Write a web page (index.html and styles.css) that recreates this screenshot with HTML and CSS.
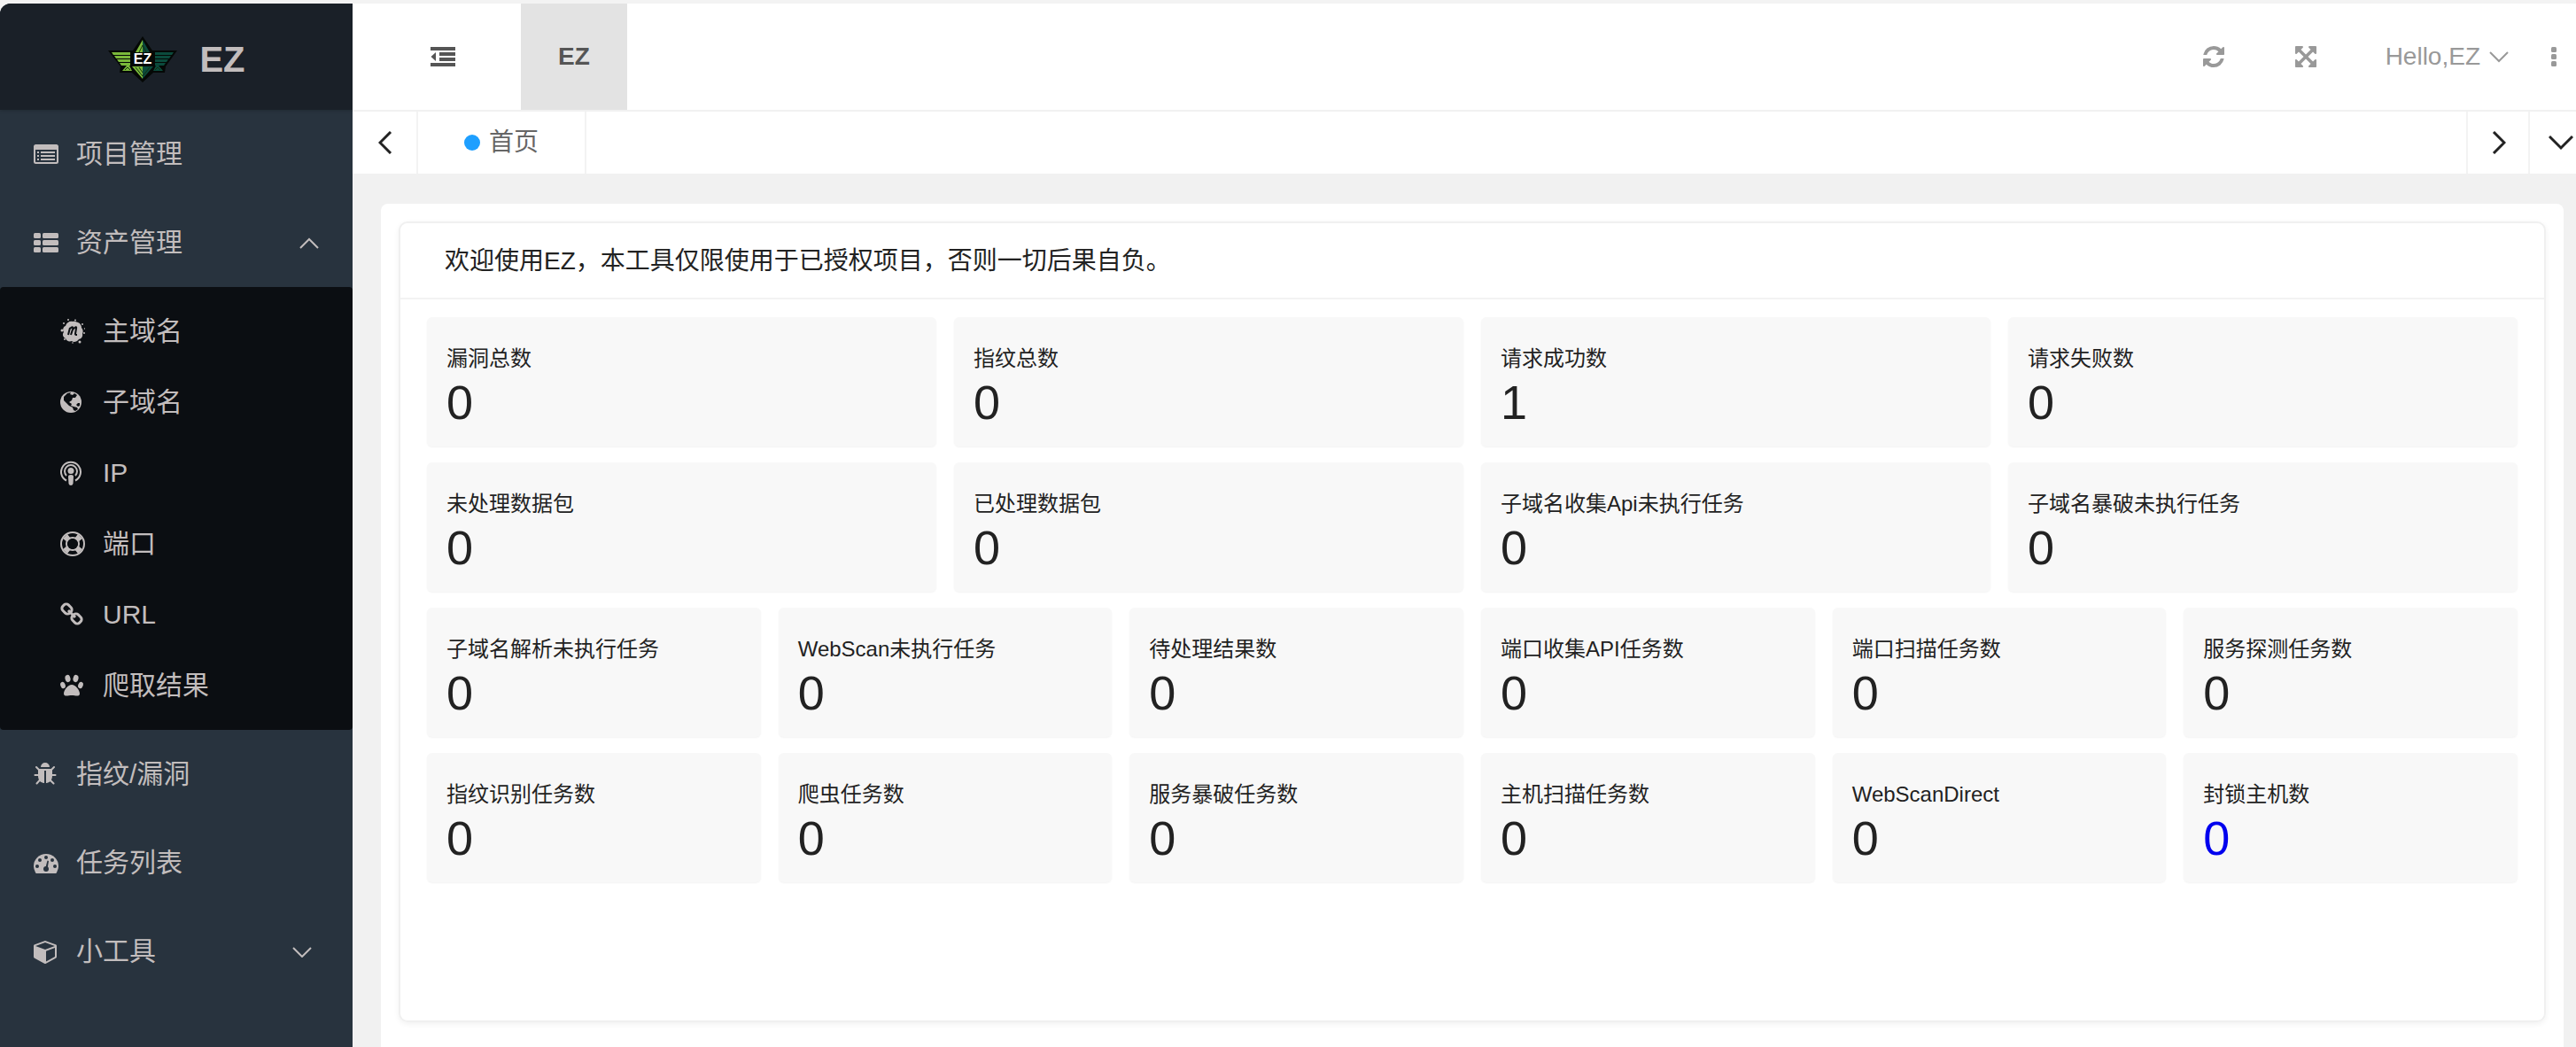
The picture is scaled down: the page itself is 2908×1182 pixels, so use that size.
FILE: index.html
```html
<!DOCTYPE html>
<html lang="zh-CN">
<head>
    <meta charset="UTF-8">
    <meta name="viewport" content="width=device-width, initial-scale=1.0">
    <title>EZ</title>
    <link rel="stylesheet" href="styles.css">
</head>
<body>
    <div class="layout">
        <aside class="sidebar">
            <a class="logo" href="#">
                <svg width="80" height="54" viewBox="0 0 80 54">
                    <path fill="#050806" d="M40 1L51 17H79L66 35L65 42H52L40 53L28 42H14L15 35L1 17H29Z"/>
                    <path fill="#7ab83a" d="M40 5V19H32ZM5 19H26V22H7ZM8 23H26V26H10ZM11 27H26V30H13ZM14 31H26V34H16ZM22 34L17 40H28L25 34ZM28 35H40V49Z"/>
                    <path fill="#0b4a3c" d="M40 5V19H48ZM54 19H75L73 22H54ZM54 23H72L70 26H54ZM54 27H69L67 30H54ZM54 31H66L64 34H54ZM58 34L63 40H52L55 34ZM52 35H40V49Z"/>
                    <path stroke="#12300f" stroke-width="1" fill="none" d="M32 36L40 46M36 36L40 42M48 36L40 46M20 39L23 36L26 39M54 39L57 36L60 39M36 19L40 11L44 19"/>
                    <path fill="#050806" d="M28 19H53V33H28Z"/>
                    <text class="logo-mark" x="40" y="32" text-anchor="middle">EZ</text>
                </svg>
                <span>EZ</span>
            </a>
            <ul class="menu">
                <li>
                    <a href="#">
                        <svg class="icon" viewBox="0 0 28 28"><path fill-rule="evenodd" d="M2.500 3H25.500A2.500 2.500 0 0 1 28 5.500V22.500A2.500 2.500 0 0 1 25.500 25H2.500A2.500 2.500 0 0 1 0 22.500V5.500A2.500 2.500 0 0 1 2.500 3ZM2 9V22.500L2.500 23H25.500L26 22.500V9Z"/><path d="M4 11h2v2H4zM8 11h16v2H8zM4 15h2v2H4zM8 15h16v2H8zM4 19h2v2H4zM8 19h16v2H8z"/></svg>
                        项目管理
                    </a>
                </li>
                <li>
                    <a href="#">
                        <svg class="icon" viewBox="0 0 28 28"><rect y="3" width="8" height="6" rx="1.500"/><rect x="10" y="3" width="18" height="6" rx="1.500"/><rect y="11" width="8" height="6" rx="1.500"/><rect x="10" y="11" width="18" height="6" rx="1.500"/><rect y="19" width="8" height="6" rx="1.500"/><rect x="10" y="19" width="18" height="6" rx="1.500"/></svg>
                        资产管理
                        <svg class="arrow arrow-up" width="22" height="14" viewBox="0 0 22 14"><path d="M1 13L11 3L21 13"/></svg>
                    </a>
                    <ul class="submenu">
                        <li><a href="#">
                            <svg class="icon" viewBox="0 0 28 28"><path d="M14 3C17 2 19 4 20 4C23 5 24 8 24 10C26 12 26 15 25 17C26 20 23 23 21 23C19 26 15 27 13 25C10 26 7 25 6 22C3 21 2 17 4 15C2 12 4 8 6 8C7 4 11 2 14 3Z"/><circle cx="9" cy="1" r="1"/><circle cx="17" cy="1.500" r="1"/><circle cx="2" cy="13" r="1.500"/><circle cx="4" cy="5" r="1"/><circle cx="25" cy="6" r="1"/><circle cx="27.500" cy="11" r=".7"/><circle cx="27" cy="16" r="1"/><circle cx="5" cy="23" r="1"/><circle cx="22" cy="26" r="1.500"/><circle cx="14" cy="27" r=".8"/><path class="cut-line" d="M9 18L11 10M11 11Q15 7 14 12L12 18M14 12Q19 7 18 11L17 17Q17 18 19 18"/></svg>
                            主域名
                        </a></li>
                        <li><a href="#">
                            <svg class="icon" viewBox="0 0 28 28"><circle cx="12" cy="14" r="12"/><path class="cut" d="M4 8L8 4L12 3L11 5L14 6L16 4L19 6L17 9L14 9L13 12L10 14L13 16L12 18L15 19L19 20L20 22L17 24L15 23L14 20L10 18L7 15L4 12ZM18 17L20 15L22 15L22 18L20 19Z"/></svg>
                            子域名
                        </a></li>
                        <li><a href="#">
                            <svg class="icon" viewBox="0 0 28 28"><path class="line" d="M7 22.500A11 11 0 1 1 17 22.500M7 17A7 7 0 1 1 17 17"/><circle cx="12" cy="11.500" r="3.500"/><path d="M9 18Q9 16 12 16T15 18L14.500 26Q14 28 12 28T9.500 26Z"/></svg>
                            IP
                        </a></li>
                        <li><a href="#">
                            <svg class="icon" viewBox="0 0 28 28"><circle class="line" cx="14" cy="14" r="13"/><circle class="line" cx="14" cy="14" r="7"/><path d="M3 8L8 3L12 8L8 12ZM20 3L25 8L20 12L16 8ZM3 20L8 16L12 20L8 25ZM20 25L25 20L20 16L16 20Z"/><circle class="cut" cx="14" cy="14" r="6"/></svg>
                            端口
                        </a></li>
                        <li><a href="#">
                            <svg class="icon" viewBox="0 0 28 28"><g class="link-line"><rect x="2" y="3" width="11" height="9" rx="3.500" transform="rotate(45 7.500 7.500)"/><rect x="13" y="14" width="11" height="9" rx="3.500" transform="rotate(45 18.500 18.500)"/><path d="M9 9L17 17"/></g></svg>
                            URL
                        </a></li>
                        <li><a href="#">
                            <svg class="icon" viewBox="0 0 28 28"><ellipse cx="8.500" cy="6" rx="3" ry="4.200" transform="rotate(-12 8.500 6)"/><ellipse cx="17.500" cy="6" rx="3" ry="4.200" transform="rotate(12 17.500 6)"/><ellipse cx="3" cy="13.500" rx="2.700" ry="3.800" transform="rotate(-20 3 13.500)"/><ellipse cx="23" cy="13.500" rx="2.700" ry="3.800" transform="rotate(20 23 13.500)"/><path d="M13 13C17 13 22 19 22 23C22 27 17 25 13 25S4 27 4 23C4 19 9 13 13 13Z"/></svg>
                            爬取结果
                        </a></li>
                    </ul>
                </li>
                <li>
                    <a href="#">
                        <svg class="icon" viewBox="64 0 1792 1792"><path d="M1696 960q0 26-19 45t-45 19h-224q0 171-67 290l208 209q19 19 19 45t-19 45q-18 19-45 19t-45-19l-198-197q-5 5-15 13t-42 28.500-65 36.500-82 29-97 13v-896h-128v896q-51 0-101.500-13.500t-87-33-66-39-43.500-32.500l-15-14-183 207q-20 21-48 21-24 0-43-16-19-18-20.500-44.500t15.500-46.500l202-227q-58-114-58-274h-224q-26 0-45-19t-19-45 19-45 45-19h224v-294l-173-173q-19-19-19-45t19-45 45-19 45 19l173 173h844l173-173q19-19 45-19t45 19 19 45-19 45l-173 173v294h224q26 0 45 19t19 45zm-480-576h-640q0-133 93.500-226.500t226.500-93.500 226.500 93.500 93.500 226.500z"/></svg>
                        指纹/漏洞
                    </a>
                </li>
                <li>
                    <a href="#">
                        <svg class="icon" viewBox="0 0 28 28"><path d="M2 25Q0 21 0 18A14 14 0 0 1 28 18Q28 21 26 25Q25.500 26 25 26H3Q2.500 26 2 25Z"/><g class="cut-menu"><circle cx="4" cy="18" r="2"/><circle cx="7" cy="11" r="2"/><circle cx="14" cy="8" r="2"/><circle cx="21" cy="11" r="2"/><circle cx="24" cy="18" r="2"/><circle cx="14" cy="21" r="3"/><path d="M13 21L15.500 11.500L17 12L15.500 21Z"/></g></svg>
                        任务列表
                    </a>
                </li>
                <li>
                    <a href="#">
                        <svg class="icon" viewBox="64 0 1792 1792"><path d="M896 1629l640-349v-636l-640 233v752zm-64-865l698-254-698-254-698 254zm832-252v768q0 35-18 65t-49 47l-704 384q-28 16-61 16t-61-16l-704-384q-31-17-49-47t-18-65v-768q0-40 23-73t61-47l704-256q22-8 44-8t44 8l704 256q38 14 61 47t23 73z" transform="translate(64 0)"/></svg>
                        小工具
                        <svg class="arrow arrow-down" width="22" height="14" viewBox="0 0 22 14"><path d="M1 3L11 13L21 3"/></svg>
                    </a>
                </li>
            </ul>
        </aside>

        <div class="main">
            <header class="header">
                <button class="toggle" type="button" aria-label="收起菜单">
                    <svg class="icon" viewBox="0 0 28 28"><path d="M0 3h28v4H0zM10 9h18v4H10zM10 15h18v4H10zM0 21h28v4H0zM6 9v10L0.500 14z"/></svg>
                </button>
                <a class="module" href="#">EZ</a>
                <div class="tools">
                    <button type="button" aria-label="刷新">
                        <svg class="icon" viewBox="0 0 1792 1792"><path d="M1639 1056q0 5-1 7-64 268-268 434.500t-478 166.500q-146 0-282.500-55t-243.500-157l-129 129q-19 19-45 19t-45-19-19-45v-448q0-26 19-45t45-19h448q26 0 45 19t19 45-19 45l-137 137q71 66 161 102t187 36q134 0 250-65t186-179q11-17 53-117 8-23 30-23h192q13 0 22.500 9.500t9.500 22.500zm25-800v448q0 26-19 45t-45 19h-448q-26 0-45-19t-19-45 19-45l138-138q-148-137-349-137-134 0-250 65t-186 179q-11 17-53 117-8 23-30 23h-199q-13 0-22.500-9.500t-9.500-22.500v-7q65-268 270-434.500t480-166.500q146 0 284 55.500t245 156.500l130-129q19-19 45-19t45 19 19 45z"/></svg>
                    </button>
                    <button type="button" aria-label="全屏">
                        <svg class="icon" viewBox="0 0 1792 1792"><path d="M1411 541l-355 355 355 355 144-144q29-31 70-14 39 17 39 59v448q0 26-19 45t-45 19h-448q-42 0-59-40-17-39 14-69l144-144-355-355-355 355 144 144q31 30 14 69-17 40-59 40h-448q-26 0-45-19t-19-45v-448q0-42 40-59 39-17 69 14l144 144 355-355-355-355-144 144q-19 19-45 19-12 0-24-5-40-17-40-59v-448q0-26 19-45t45-19h448q42 0 59 40 17 39-14 69l-144 144 355 355 355-355-144-144q-31-30-14-69 17-40 59-40h448q26 0 45 19t19 45v448q0 42-39 59-13 5-25 5-26 0-45-19z"/></svg>
                    </button>
                    <a class="user" href="#">
                        Hello,EZ
                        <svg class="arrow" width="22" height="14" viewBox="0 0 22 14"><path d="M1 2L11 12L21 2"/></svg>
                    </a>
                    <button class="more" type="button" aria-label="更多">
                        <svg width="6" height="22" viewBox="0 0 6 22"><rect width="6" height="6" rx="1.500"/><rect y="8" width="6" height="6" rx="1.500"/><rect y="16" width="6" height="6" rx="1.500"/></svg>
                    </button>
                </div>
            </header>

            <nav class="tabs">
                <button type="button" aria-label="向左"><svg width="16" height="26" viewBox="0 0 16 26"><path d="M14 1L2 13L14 25"/></svg></button>
                <a class="tab" href="#"><span class="dot"></span>首页</a>
                <button class="next" type="button" aria-label="向右"><svg width="16" height="26" viewBox="0 0 16 26"><path d="M2 1L14 13L2 25"/></svg></button>
                <button class="close" type="button" aria-label="标签操作"><svg width="28" height="18" viewBox="0 0 28 18"><path d="M1 2L14 15L27 2"/></svg></button>
            </nav>

            <main class="content">
                <div class="panel">
                    <section class="card">
                        <h1>欢迎使用EZ，本工具仅限使用于已授权项目，否则一切后果自负。</h1>
                        <div class="stats">
                            <div class="row four">
                                <div class="stat"><h2>漏洞总数</h2><p>0</p></div>
                                <div class="stat"><h2>指纹总数</h2><p>0</p></div>
                                <div class="stat"><h2>请求成功数</h2><p>1</p></div>
                                <div class="stat"><h2>请求失败数</h2><p>0</p></div>
                                <div class="stat"><h2>未处理数据包</h2><p>0</p></div>
                                <div class="stat"><h2>已处理数据包</h2><p>0</p></div>
                                <div class="stat"><h2>子域名收集Api未执行任务</h2><p>0</p></div>
                                <div class="stat"><h2>子域名暴破未执行任务</h2><p>0</p></div>
                            </div>
                            <div class="row six">
                                <div class="stat"><h2>子域名解析未执行任务</h2><p>0</p></div>
                                <div class="stat"><h2>WebScan未执行任务</h2><p>0</p></div>
                                <div class="stat"><h2>待处理结果数</h2><p>0</p></div>
                                <div class="stat"><h2>端口收集API任务数</h2><p>0</p></div>
                                <div class="stat"><h2>端口扫描任务数</h2><p>0</p></div>
                                <div class="stat"><h2>服务探测任务数</h2><p>0</p></div>
                                <div class="stat"><h2>指纹识别任务数</h2><p>0</p></div>
                                <div class="stat"><h2>爬虫任务数</h2><p>0</p></div>
                                <div class="stat"><h2>服务暴破任务数</h2><p>0</p></div>
                                <div class="stat"><h2>主机扫描任务数</h2><p>0</p></div>
                                <div class="stat"><h2>WebScanDirect</h2><p>0</p></div>
                                <div class="stat"><h2>封锁主机数</h2><p><a href="#">0</a></p></div>
                            </div>
                        </div>
                    </section>
                </div>
            </main>
        </div>
    </div>
</body>
</html>
```

FILE: styles.css
```css
* {
    box-sizing: border-box;
}
body {
    margin: 0;
    padding-top: 4px;
    background-color: #f3f3f3;
    font-family: "Liberation Sans", "Noto Sans CJK SC", sans-serif;
    font-size: 28px;
    line-height: 1;
    color: #222;
}
ul, h1, h2, p {
    margin: 0;
    padding: 0;
    list-style: none;
    font-weight: normal;
}
a {
    color: inherit;
    text-decoration: none;
}
button {
    display: flex;
    align-items: center;
    justify-content: center;
    padding: 0;
    border: none;
    background: none;
    color: inherit;
    cursor: pointer;
}
svg {
    flex-shrink: 0;
    fill: currentColor;
}
.icon {
    width: 28px;
    height: 28px;
}
.arrow {
    fill: none;
    stroke: currentColor;
    stroke-width: 2;
}
.layout {
    display: flex;
    min-height: calc(100vh - 4px);
}

/* sidebar */
.sidebar {
    width: 398px;
    flex-shrink: 0;
    background-color: #28333e;
    color: #c2bdbd;
    border-top-left-radius: 12px;
    overflow: hidden;
}
.logo {
    display: flex;
    align-items: center;
    justify-content: center;
    gap: 24px;
    height: 120px;
    padding-top: 6px;
    background-color: #1a2028;
    box-shadow: 0 1px 4px rgba(0, 0, 0, 0.2);
    font-size: 40px;
    font-weight: bold;
}
.logo-mark {
    fill: #fff;
    font-size: 16px;
    font-weight: bold;
}
.menu a {
    display: flex;
    align-items: center;
    gap: 20px;
    height: 100px;
    padding: 0 38px;
    font-size: 30px;
}
.menu .arrow {
    margin-left: auto;
}
.menu .arrow-down {
    margin-right: 8px;
}
.submenu {
    padding: 10px 0;
    background-color: #0b0e12;
    border-radius: 4px;
}
.menu .submenu a {
    height: 80px;
    padding-left: 68px;
}
.line {
    fill: none;
    stroke: currentColor;
    stroke-width: 2;
}
.link-line {
    fill: none;
    stroke: currentColor;
    stroke-width: 3;
}
.cut {
    fill: #0b0e12;
}
.cut-line {
    fill: none;
    stroke: #0b0e12;
    stroke-width: 2;
}
.cut-menu {
    fill: #28333e;
}

/* header */
.main {
    display: flex;
    flex-direction: column;
    flex: 1;
    min-width: 0;
}
.header {
    display: flex;
    height: 122px;
    background-color: #fff;
    border-bottom: 2px solid #f1f1f1;
    color: #555;
}
.toggle {
    width: 176px;
    margin-left: 14px;
}
.module {
    width: 120px;
    line-height: 120px;
    background-color: #e3e3e3;
    text-align: center;
    font-weight: bold;
}
.tools {
    display: flex;
    align-items: center;
    margin-left: auto;
    padding-right: 22px;
    color: #999;
}
.tools button {
    width: 104px;
    height: 120px;
}
.user {
    display: flex;
    align-items: center;
    gap: 10px;
    padding: 0 48px 0 38px;
}
.tools .more {
    width: 6px;
}

/* tabs */
.tabs {
    display: flex;
    height: 70px;
    background-color: #fff;
}
.tabs button {
    width: 74px;
    padding-left: 2px;
    border-right: 2px solid #f3f3f3;
}
.tabs svg {
    fill: none;
    stroke: #222;
    stroke-width: 3;
}
.tab {
    display: flex;
    align-items: center;
    gap: 10px;
    padding: 0 52px;
    border-right: 2px solid #f3f3f3;
    color: #666;
}
.dot {
    width: 18px;
    height: 18px;
    border-radius: 50%;
    background-color: #1e9fff;
}
.tabs .next {
    width: 72px;
    margin-left: auto;
    border-left: 2px solid #f3f3f3;
}
.tabs .close {
    width: 52px;
    padding-left: 18px;
    border-right: none;
}

/* content */
.content {
    display: flex;
    flex: 1;
    padding: 34px 14px 0 32px;
    background-color: #f1f1f1;
}
.panel {
    display: flex;
    flex: 1;
    padding: 20px 20px 28px;
    background-color: #fff;
    border-radius: 8px 8px 0 0;
}
.card {
    flex: 1;
    border: 2px solid #f0f0f0;
    border-radius: 10px;
    box-shadow: 0 2px 6px rgba(0, 0, 0, 0.06);
}
.card h1 {
    padding: 2px 50px 0;
    border-bottom: 2px solid #f3f3f3;
    font-size: 28px;
    line-height: 82px;
}
.stats {
    display: grid;
    gap: 18px;
    padding: 20px 30px;
}
.row {
    display: grid;
    gap: 18px 20px;
}
.four {
    grid-template-columns: repeat(4, 1fr);
}
.six {
    grid-template-columns: repeat(6, 1fr);
}
.stat {
    padding: 30px 22px 18px;
    background-color: #f8f8f8;
    border-radius: 6px;
    box-shadow: 0 1px 2px rgba(0, 0, 0, 0.05);
}
.stat h2 {
    font-size: 24px;
    line-height: 34px;
}
.stat p {
    font-size: 54px;
    line-height: 64px;
}
.stat a {
    color: #00e;
}
```
